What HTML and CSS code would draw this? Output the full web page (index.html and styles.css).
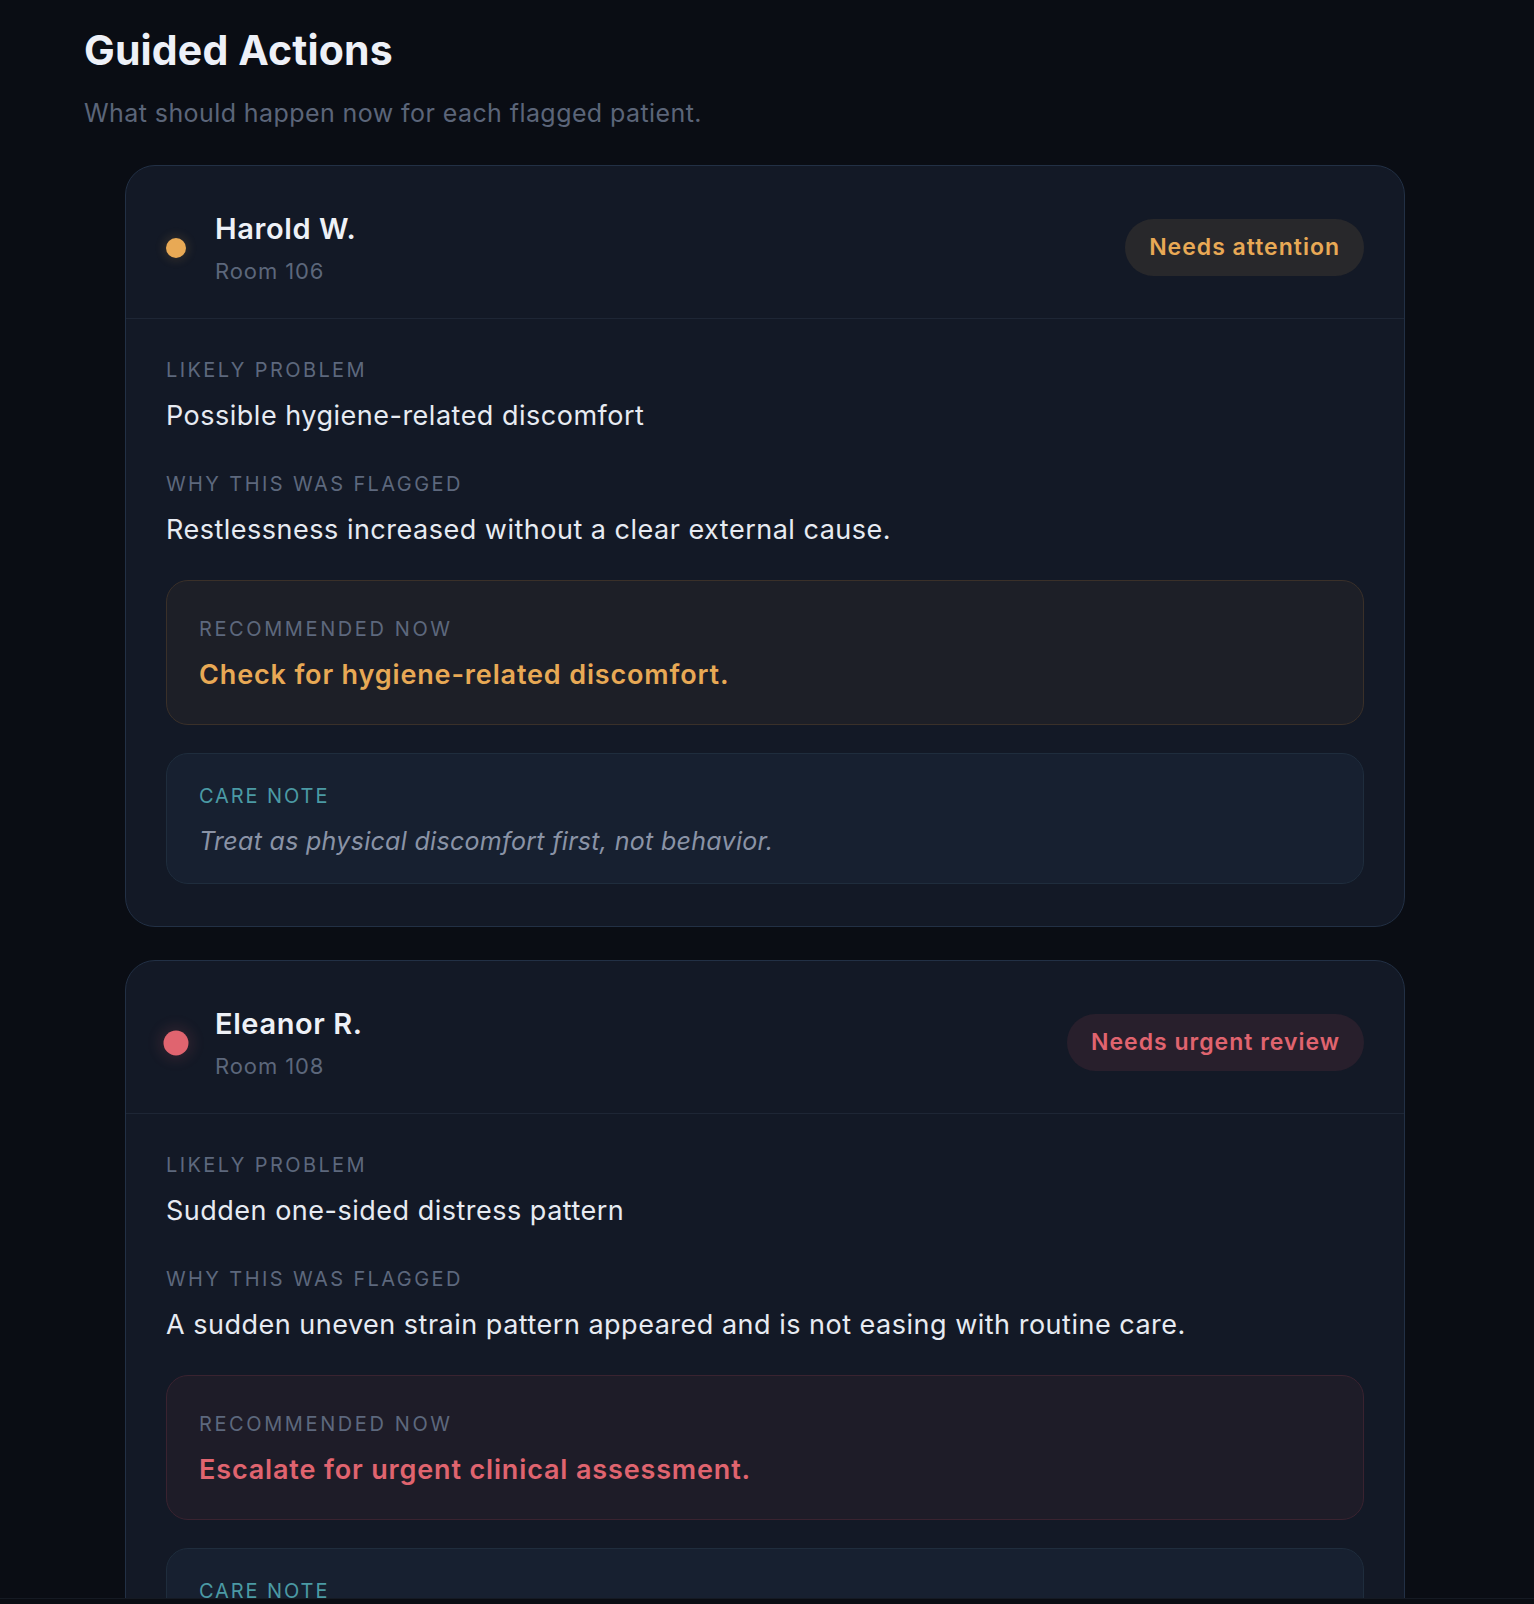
FILE: index.html
```html
<!DOCTYPE html>
<html lang="en">
<head>
<meta charset="utf-8">
<title>Guided Actions</title>
<link rel="stylesheet" href="styles.css">
</head>
<body>
<main class="page">
  <h1 class="title">Guided Actions</h1>
  <p class="subtitle">What should happen now for each flagged patient.</p>

  <section class="cards">
    <article class="card card-attention">
      <header class="card-head">
        <span class="dot"></span>
        <div class="who">
          <div class="name">Harold W.</div>
          <div class="room">Room 106</div>
        </div>
        <span class="badge">Needs attention</span>
      </header>
      <div class="card-body">
        <div class="label">Likely problem</div>
        <div class="value">Possible hygiene-related discomfort</div>
        <div class="label">Why this was flagged</div>
        <div class="value">Restlessness increased without a clear external cause.</div>
        <div class="rec">
          <div class="label">Recommended now</div>
          <div class="rec-text">Check for hygiene-related discomfort.</div>
        </div>
        <div class="note">
          <div class="label note-label">Care note</div>
          <div class="note-text">Treat as physical discomfort first, not behavior.</div>
        </div>
      </div>
    </article>

    <article class="card card-urgent">
      <header class="card-head">
        <span class="dot"></span>
        <div class="who">
          <div class="name">Eleanor R.</div>
          <div class="room">Room 108</div>
        </div>
        <span class="badge">Needs urgent review</span>
      </header>
      <div class="card-body">
        <div class="label">Likely problem</div>
        <div class="value">Sudden one-sided distress pattern</div>
        <div class="label">Why this was flagged</div>
        <div class="value">A sudden uneven strain pattern appeared and is not easing with routine care.</div>
        <div class="rec">
          <div class="label">Recommended now</div>
          <div class="rec-text">Escalate for urgent clinical assessment.</div>
        </div>
        <div class="note">
          <div class="label note-label">Care note</div>
          <div class="note-text">Do not wait for the next scheduled check.</div>
        </div>
      </div>
    </article>
  </section>
</main>
<div class="bottom-bar"></div>
</body>
</html>
```

FILE: styles.css
```css
* { box-sizing: border-box; }

html, body {
  margin: 0;
  padding: 0;
  background: #0a0d14;
}

body {
  font-family: "Inter", "Noto Sans", "Liberation Sans", sans-serif;
  color: #e7ebf2;
}

.page {
  padding: 26px 84px 40px;
}

.title {
  margin: 0;
  font-size: 41px;
  line-height: 49px;
  font-weight: 700;
  color: #eef1f8;
  letter-spacing: 0.15px;
}

.subtitle {
  margin: 20px 0 0;
  font-size: 25px;
  line-height: 36px;
  font-weight: 400;
  color: #5b6579;
  letter-spacing: 0.42px;
}

.cards {
  margin: 34px 0 0 41px;
  width: 1280px;
  display: flex;
  flex-direction: column;
  gap: 33px;
}

.card {
  background: #131926;
  border: 1px solid #223045;
  border-radius: 30px;
  overflow: hidden;
}

.card-head {
  display: flex;
  align-items: center;
  padding: 45px 40px 34px;
  border-bottom: 1px solid #1e2635;
}

.dot {
  width: 20px;
  height: 20px;
  border-radius: 50%;
  flex: none;
  margin-right: 29px;
}

.card-attention .dot {
  background: #e8a955;
  box-shadow: 0 0 10px 3px rgba(232, 169, 85, 0.12);
}

.card-urgent .dot {
  background: #e0646f;
  transform: scale(1.25);
  box-shadow: 0 0 10px 4px rgba(224, 100, 111, 0.12);
}

.who {
  flex: 1;
}

.name {
  font-size: 29px;
  font-weight: 600;
  color: #eef1f7;
  line-height: normal;
  letter-spacing: 0.6px;
}

.room {
  margin-top: 12px;
  font-size: 22px;
  color: #5c677b;
  line-height: normal;
  letter-spacing: 0.9px;
}

.badge {
  flex: none;
  height: 57px;
  line-height: 57px;
  padding: 0 24px;
  border-radius: 999px;
  font-size: 23px;
  font-weight: 600;
  letter-spacing: 1px;
}

.card-attention .badge {
  background: #28282b;
  color: #e8a955;
}

.card-urgent .badge {
  background: #281f2c;
  color: #e0646f;
}

.card-body {
  padding: 37px 40px 42px;
}

.label {
  font-size: 20px;
  line-height: 28px;
  letter-spacing: 2.4px;
  text-transform: uppercase;
  color: #5d687d;
  margin-bottom: 14px;
}

.value {
  font-size: 27px;
  line-height: 36px;
  color: #e7ebf2;
  margin-bottom: 36px;
  letter-spacing: 0.5px;
}

.value + .rec {
  margin-top: -4px;
}

.rec {
  border-radius: 22px;
  padding: 34px 32px 31px;
  margin-bottom: 28px;
}

.rec .label {
  margin-bottom: 14px;
  letter-spacing: 2.6px;
}

.card-attention .rec {
  background: #1d1f27;
  border: 1px solid #3a3029;
}

.card-urgent .rec {
  background: #1e1c28;
  border: 1px solid #3a2330;
}

.rec-text {
  font-size: 27px;
  line-height: 36px;
  font-weight: 600;
  letter-spacing: 0.85px;
}

.card-attention .rec-text { color: #e8a955; }
.card-urgent .rec-text { color: #e0646f; }

.note {
  background: #172030;
  border: 1px solid #1f2d3d;
  border-radius: 22px;
  padding: 28px 32px 25px;
}

.note .label {
  color: #4b9aa4;
  margin-bottom: 14px;
  letter-spacing: 1.9px;
}

.note-text {
  font-size: 25px;
  line-height: 34px;
  font-style: italic;
  color: #8a93a6;
  letter-spacing: 0.3px;
}

.bottom-bar {
  position: fixed;
  left: 0;
  right: 0;
  bottom: 0;
  height: 6px;
  background: #0a0d13;
  border-top: 1px solid #151a23;
}
```
